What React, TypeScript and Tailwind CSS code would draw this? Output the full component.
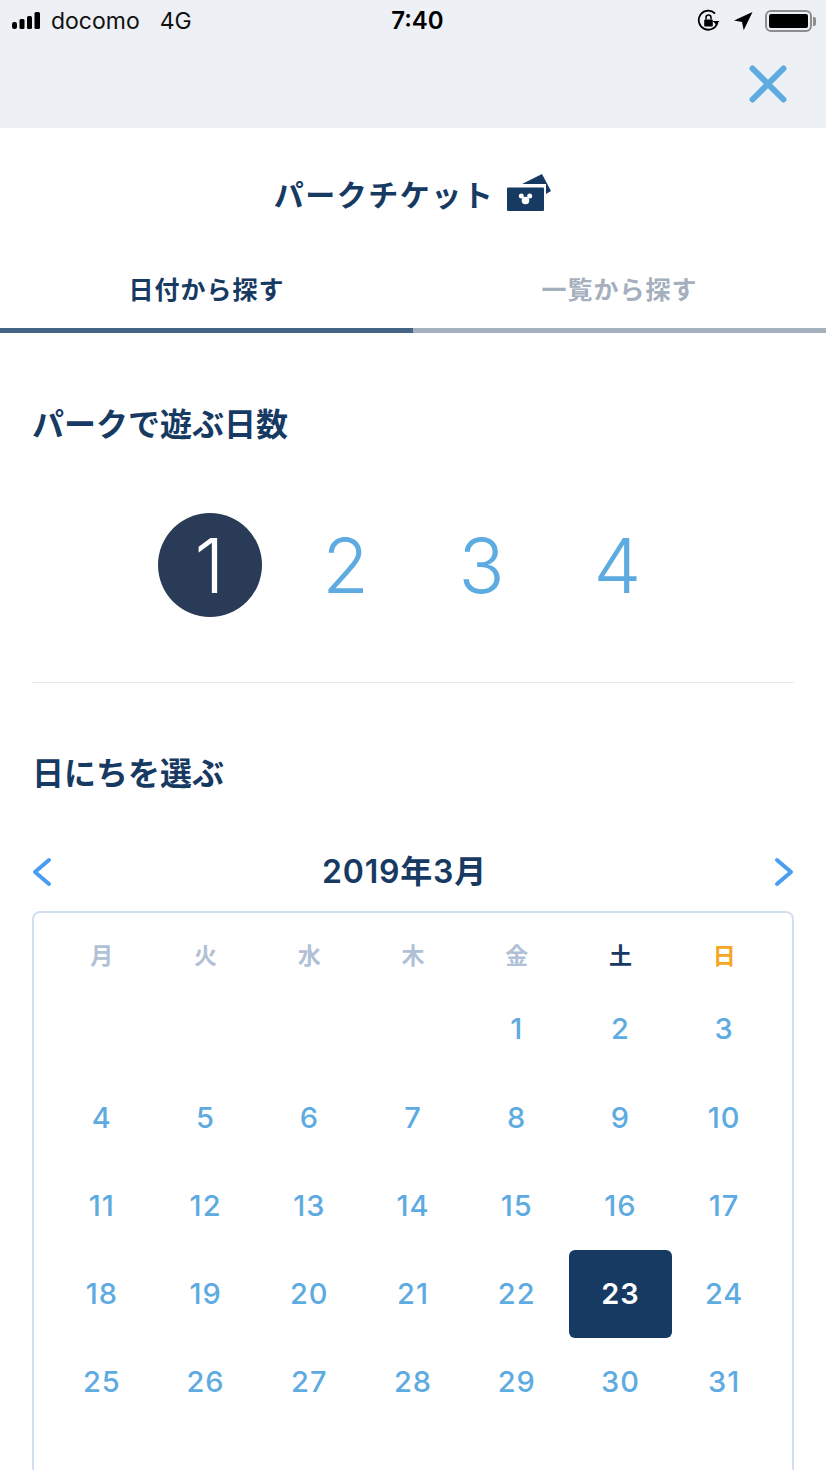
const jp = { fontFamily: '"Noto Sans CJK JP", sans-serif' };
const num = { fontFamily: 'Inter, "Noto Sans CJK JP", sans-serif' };
const sf = { fontFamily: 'Inter, "Liberation Sans", sans-serif' };

function Signal() {
  return (
    <svg width="34" height="20" viewBox="0 0 34 20" className="shrink-0" fill="#000">
      <rect x="0" y="11" width="5" height="7" rx="2.2" />
      <rect x="7.5" y="8" width="5" height="10" rx="1.5" />
      <rect x="15" y="5" width="5" height="13" rx="1.5" />
      <rect x="22.5" y="1" width="5.5" height="17" rx="1.5" />
    </svg>
  );
}

function StatusBar() {
  return (
    <div className="relative flex h-[42px] items-center pl-3 pr-[10px] text-black">
      <div className="flex items-center" style={sf}>
        <Signal />
        <span className="ml-[5px] text-[23px] leading-none text-[#111]">docomo</span>
        <span className="ml-[20px] text-[23px] leading-none text-[#111]">4G</span>
      </div>
      <span className="flex-1 pr-[54px] text-center text-[24px] font-semibold leading-none" style={sf}>
        7:40
      </span>
      <div className="flex items-center gap-[12px]">
        <svg width="24" height="24" viewBox="0 0 24 24" fill="none" stroke="#000">
          <path d="M20.5 13.5A9.5 9.5 0 1 1 18 4.5" strokeWidth="1.8" />
          <path d="M19 15.5l3.6-3.4h-7z" fill="#000" stroke="none" />
          <rect x="7.2" y="10.4" width="8.6" height="7" rx="1" fill="#000" stroke="none" />
          <path d="M9 10.5V8.4a2.5 2.5 0 0 1 5 0v2.1" strokeWidth="1.5" />
        </svg>
        <svg width="20" height="20" viewBox="0 0 20 20" fill="#000">
          <path d="M19.5 1 1 9.6l8 1.4 1.7 8.2z" />
        </svg>
        <div className="flex items-center">
          <div className="h-[22px] w-[47px] rounded-[6px] border-2 border-[#8d8d8d] p-[2px]">
            <div className="h-full w-[39px] rounded-[2px] bg-black" />
          </div>
          <div className="ml-[1px] h-[9px] w-[3px] rounded-r-[2px] bg-[#8d8d8d]" />
        </div>
      </div>
    </div>
  );
}

function Header() {
  return (
    <div className="bg-[#edf0f4]">
      <StatusBar />
      <div className="flex h-[86px] items-start justify-end pr-[39px] pt-[23px]">
        <svg width="38" height="38" viewBox="0 0 38 38" stroke="#5dabe0" strokeWidth="6" strokeLinecap="round">
          <path d="M3.5 3.5l31 31M34.5 3.500 3.500 34.500" />
        </svg>
      </div>
    </div>
  );
}

function TicketIcon() {
  return (
    <svg width="46" height="40" viewBox="0 0 46 40" fill="#173a63">
      <path d="M16 12 36 2l9 17-5 3V12z" />
      <rect x="1" y="15.500" width="37" height="23.500" rx="1" />
      <circle cx="19.500" cy="28.500" r="3.800" fill="#fff" />
      <circle cx="15.300" cy="24" r="2.500" fill="#fff" />
      <circle cx="23.700" cy="24" r="2.500" fill="#fff" />
    </svg>
  );
}

function Tabs() {
  return (
    <div className="grid grid-cols-2">
      <div className="flex h-[79px] items-start justify-center border-b-[5px] border-[#436484] pt-[16px] text-[25px] font-bold leading-[36px] tracking-[1px] text-[#173a63]">
        日付から探す
      </div>
      <div className="flex h-[79px] items-start justify-center border-b-[5px] border-[#a5afbd] pt-[16px] text-[25px] font-bold leading-[36px] tracking-[1px] text-[#a5afbd]">
        一覧から探す
      </div>
    </div>
  );
}

function Days() {
  return (
    <div className="mt-[69px] flex justify-center pl-[1px]">
      <div className="flex items-center gap-[32px]" style={num}>
        {["1", "2", "3", "4"].map((d, i) => (
          <div
            key={d}
            className={
              i === 0
                ? "flex h-[104px] w-[104px] items-center justify-center rounded-full bg-[#2a3b57] text-[76px] font-light leading-none text-white"
                : "flex h-[104px] w-[104px] items-center justify-center text-[76px] font-light leading-none text-[#5dabe0]"
            }
          >
            {d}
          </div>
        ))}
      </div>
    </div>
  );
}

const weekdays = [
  { t: "月", c: "text-[#b0c1d6]" },
  { t: "火", c: "text-[#b0c1d6]" },
  { t: "水", c: "text-[#b0c1d6]" },
  { t: "木", c: "text-[#b0c1d6]" },
  { t: "金", c: "text-[#b0c1d6]" },
  { t: "土", c: "text-[#173a63]" },
  { t: "日", c: "text-[#f5a623]" },
];

const dates: (number | null)[] = [
  null, null, null, null,
  ...Array.from({ length: 31 }, (_, i) => i + 1),
];

function Calendar() {
  return (
    <div className="mx-[32px] mt-[17px] h-[700px] rounded-t-[8px] border-2 border-[#d3dfee] pl-[16px] pr-[16px]">
      <div className="grid grid-cols-7 pt-[21px]">
        {weekdays.map((w) => (
          <div key={w.t} className={`h-[40px] text-center text-[23px] font-bold leading-[40px] ${w.c}`}>
            {w.t}
          </div>
        ))}
      </div>
      <div className="mt-[11px] grid grid-cols-7 auto-rows-[88.25px]" style={num}>
        {dates.map((d, i) => (
          <div key={i} className="flex items-center justify-center">
            {d === 23 ? (
              <div className="flex h-[88px] w-[104px] items-center justify-center rounded-[6px] bg-[#173a63] text-[29px] font-semibold tracking-[1px] text-white">
                23
              </div>
            ) : (
              <span className="text-[29px] font-medium tracking-[1px] text-[#5dabe0]">{d}</span>
            )}
          </div>
        ))}
      </div>
    </div>
  );
}

export default function App() {
  return (
    <div className="h-[1470px] w-[826px] overflow-hidden bg-white" style={jp}>
      <Header />
      <div className="flex h-[126px] items-start justify-center pt-[40px]">
        <span className="text-[30px] font-bold leading-[50px] tracking-[1.500px] text-[#173a63]">パークチケット</span>
        <span className="ml-[12px] mt-[4px]"><TicketIcon /></span>
      </div>
      <Tabs />
      <h2 className="ml-[32px] mt-[67px] text-[32px] font-bold leading-[44px] text-[#173a63]">パークで遊ぶ日数</h2>
      <Days />
      <div className="mx-[32px] mt-[65px] h-[1px] bg-[#e6e9ee]" />
      <h2 className="ml-[32px] mt-[66px] text-[32px] font-bold leading-[44px] text-[#173a63]">日にちを選ぶ</h2>
      <div className="mx-[32px] mt-[57px] flex h-[44px] items-center justify-between">
        <svg width="20" height="30" viewBox="0 0 20 30" fill="none" stroke="#4a9eef" strokeWidth="4" strokeLinecap="round" strokeLinejoin="round">
          <path d="M17 3 3 15l14 12" />
        </svg>
        <span className="mr-[17px] text-[32px] font-semibold leading-[44px] tracking-[0.8px] text-[#173a63]" style={num}>2019年3月</span>
        <svg width="20" height="30" viewBox="0 0 20 30" fill="none" stroke="#4a9eef" strokeWidth="4" strokeLinecap="round" strokeLinejoin="round">
          <path d="M3 3l14 12L3 27" />
        </svg>
      </div>
      <Calendar />
    </div>
  );
}
